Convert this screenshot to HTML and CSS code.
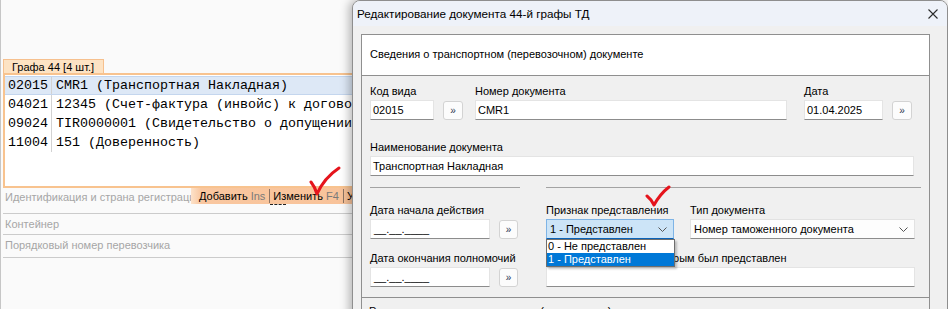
FILE: index.html
```html
<!DOCTYPE html>
<html lang="ru">
<head>
<meta charset="utf-8">
<title>Графа 44</title>
<link rel="stylesheet" href="styles.css">
</head>
<body>
<div class="app">
  <div class="tab">Графа 44 [4 шт.]</div>
  <div class="grid">
    <div class="grow selected"><span class="c1">02015</span><span class="c2">CMR1 (Транспортная Накладная)</span></div>
    <div class="grow"><span class="c1">04021</span><span class="c2">12345 (Счет-фактура (инвойс) к договору)</span></div>
    <div class="grow"><span class="c1">09024</span><span class="c2">TIR0000001 (Свидетельство о допущении)</span></div>
    <div class="grow"><span class="c1">11004</span><span class="c2">151 (Доверенность)</span></div>
  </div>
  <div class="field f1">
    <span class="flabel lab1">Идентификация и страна регистрации</span>
    <div class="toolbar">
      <span class="tb-item">Добавить <span class="key">Ins</span></span>
      <span class="tb-sep"></span>
      <span class="tb-item focus">Изменить <span class="key">F4</span></span>
      <span class="tb-sep"></span>
      <span class="tb-item">Удалить <span class="key">Del</span></span>
    </div>
  </div>
  <div class="field f2"><span class="flabel">Контейнер</span></div>
  <div class="field f3"><span class="flabel">Порядковый номер перевозчика</span></div>
</div>

<div class="dialog">
  <div class="titlebar">
    <span class="title">Редактирование документа 44-й графы ТД</span>
    <svg class="close" width="10" height="10" viewBox="0 0 10 10"><path d="M0.5 0.5 L9.5 9.5 M9.5 0.5 L0.5 9.5" stroke="#2b2b2b" stroke-width="1.1" fill="none"/></svg>
  </div>
  <div class="dbody">
    <div class="frame">
      <div class="fheader">Сведения о транспортном (перевозочном) документе</div>
      <div class="group">
        <div class="frow">
          <div class="fld w64"><div class="lbl">Код вида</div><div class="input">02015</div></div>
          <div class="pick pick-a">»</div>
          <div class="fld w312 ml12"><div class="lbl">Номер документа</div><div class="input">CMR1</div></div>
          <div class="fld w79 ml17"><div class="lbl">Дата</div><div class="input">01.04.2025</div></div>
          <div class="pick pick-a">»</div>
        </div>
        <div class="frow rb">
          <div class="fld w544"><div class="lbl">Наименование документа</div><div class="input">Транспортная Накладная</div></div>
        </div>
        <div class="seprow">
          <div class="sep w150"></div>
          <div class="sep w375 ml26"></div>
        </div>
        <div class="frow rc">
          <div class="fld w120"><div class="lbl">Дата начала действия</div><div class="input date">__.__.____</div></div>
          <div class="pick">»</div>
          <div class="fld w128 ml28 combo-wrap">
            <div class="lbl">Признак представления</div>
            <div class="select focused"><span>1 - Представлен</span><svg width="9" height="5" viewBox="0 0 9 5"><path d="M0.5 0.5 L4.5 4.5 L8.5 0.5" stroke="#555" fill="none"/></svg></div>
            <div class="dropdown">
              <div class="opt">0 - Не представлен</div>
              <div class="opt sel">1 - Представлен</div>
            </div>
          </div>
          <div class="fld w225 ml16">
            <div class="lbl">Тип документа</div>
            <div class="select"><span>Номер таможенного документа</span><svg width="9" height="5" viewBox="0 0 9 5"><path d="M0.5 0.5 L4.5 4.5 L8.5 0.5" stroke="#555" fill="none"/></svg></div>
          </div>
        </div>
        <div class="frow rd">
          <div class="fld w120"><div class="lbl">Дата окончания полномочий</div><div class="input date">__.__.____</div></div>
          <div class="pick">»</div>
          <div class="fld w369 ml28"><div class="lbl">Номер документа, с которым был представлен</div><div class="input"></div></div>
        </div>
      </div>
      <div class="group2"><div class="lbl">Реквизиты документа-основания (при наличии)</div></div>
    </div>
  </div>
</div>

<svg class="mark mark1" width="40" height="40" viewBox="0 0 40 40"><path d="M3 16 Q7 21 9 28 Q16 12 31 2" stroke="#e5141c" stroke-width="3" fill="none" stroke-linecap="round" stroke-linejoin="round"/></svg>
<svg class="mark mark2" width="40" height="40" viewBox="0 0 40 40"><path d="M3 11 Q7 14 10 20 Q16 9 25 2" stroke="#e5141c" stroke-width="3" fill="none" stroke-linecap="round" stroke-linejoin="round"/></svg>
</body>
</html>
```

FILE: styles.css
```css
* { box-sizing: border-box; }
html, body { margin: 0; padding: 0; }
body {
  width: 948px;
  height: 309px;
  overflow: hidden;
  position: relative;
  background: #fafafa;
  font-family: "Liberation Sans", Arial, sans-serif;
  font-size: 11px;
  color: #000;
}

/* background application */
.app {
  height: 309px;
  border-left: 1px solid #c6c6c6;
  padding-left: 2px;
  padding-top: 59px;
  overflow: hidden;
}
.tab {
  width: 101px;
  height: 14px;
  background: #fde3c4;
  border: 1px solid #f6c08e;
  border-bottom: none;
  line-height: 14px;
  padding-left: 8px;
  white-space: nowrap;
}
.grid {
  width: 430px;
  height: 115px;
  background: #fff;
  border: 2px solid #f8c38f;
  padding-top: 1px;
}
.grow {
  display: flex;
  height: 19px;
  line-height: 19px;
  font-family: "Liberation Mono", monospace;
  font-size: 13.33px;
  white-space: nowrap;
}
.grow.selected {
  background: #dde8f6;
  border-top: 1px solid #c4d6ee;
  border-bottom: 1px solid #c4d6ee;
  line-height: 17px;
}
.c1 {
  width: 47px;
  padding-left: 3px;
  border-right: 1px solid #d2d2d2;
  flex: none;
}
.c2 { padding-left: 4px; }

.field {
  display: flex;
  align-items: flex-start;
  width: 430px;
  border-bottom: 1px solid #cbcbcb;
  white-space: nowrap;
}
.f1 { height: 26px; }
.f2 { height: 21px; padding-top: 1px; }
.f3 { height: 23px; padding-top: 1px; }
.flabel {
  color: #a6a6a6;
  line-height: 18px;
  padding-left: 2px;
}
.lab1 {
  flex: 0 0 188px;
  overflow: hidden;
}
.toolbar {
  display: flex;
  align-items: center;
  height: 16px;
  padding-left: 8px;
  background: linear-gradient(to right, #fde2ca 0, #f9c7a0 10px, #f8c197 100%);
  flex: none;
}
.tb-item { line-height: 16px; }
.key { color: #7a7a7a; }
.tb-sep {
  width: 1px;
  height: 14px;
  background: #8c7464;
  margin: 0 3px 0 4px;
}
.tb-item.focus { position: relative; }
.tb-item.focus::after {
  content: "";
  position: absolute;
  left: -3px;
  top: 16px;
  width: 16px;
  border-top: 1px dashed #222;
}

/* dialog window */
.dialog {
  position: absolute;
  left: 352px;
  top: 0;
  width: 596px;
  height: 330px;
  background: #f0f0f0;
  border: 1px solid #8e8e8e;
  border-radius: 8px 8px 0 0;
  box-shadow: -3px 0 10px rgba(0, 0, 0, 0.28);
}
.titlebar {
  height: 25px;
  background: #eef2f9;
  border-radius: 7px 7px 0 0;
  display: flex;
  align-items: center;
  justify-content: space-between;
  padding: 0 9px 0 4px;
}
.title { white-space: nowrap; font-size: 11.7px; }
.dbody { padding: 8px 0 0 8px; }
.frame {
  width: 569px;
  border: 1px solid #8f8f8f;
  border-bottom: none;
}
.fheader {
  height: 41px;
  background: #fff;
  border-bottom: 1px solid #8f8f8f;
  padding-left: 8px;
  line-height: 38px;
  white-space: nowrap;
}
.group {
  padding: 7px 0 10px 8px;
  border-bottom: 1px solid #8f8f8f;
}
.group2 { padding: 5px 0 0 7px; height: 20px; overflow: hidden; }

.frow { display: flex; align-items: flex-end; }
.rb { margin-top: 19px; }
.rc { margin-top: 14px; }
.rd { margin-top: 11px; }
.fld { flex: none; }
.lbl {
  line-height: 16px;
  height: 16px;
  margin-bottom: 1px;
  white-space: nowrap;
}
.w64 { width: 64px; }
.w79 { width: 79px; }
.w120 { width: 120px; }
.w128 { width: 128px; }
.w150 { width: 150px; }
.w225 { width: 225px; }
.w312 { width: 312px; }
.w369 { width: 369px; }
.w375 { width: 375px; }
.w544 { width: 544px; }
.ml12 { margin-left: 12px; }
.ml16 { margin-left: 16px; }
.ml17 { margin-left: 17px; }
.ml26 { margin-left: 26px; }
.ml28 { margin-left: 28px; }

.input {
  height: 20px;
  background: #fff;
  border: 1px solid #e4e4e4;
  border-bottom-color: #8c8c8c;
  padding-left: 2px;
  line-height: 18px;
  white-space: nowrap;
  overflow: hidden;
}
.input.date { padding-left: 3px; }
.pick {
  flex: none;
  width: 19px;
  height: 19px;
  margin-left: 9px;
  border: 1px solid #d3d3d3;
  border-radius: 3px;
  background: #fcfcfc;
  font-size: 10px;
  line-height: 18px;
  text-align: center;
  color: #2a3550;
}
.pick-a { width: 20px; }
.seprow { display: flex; margin-top: 11px; }
.sep { height: 1px; background: #a3a3a3; }

.select {
  height: 20px;
  background: #fdfdfd;
  border: 1px solid #e2e2e2;
  border-bottom-color: #8c8c8c;
  display: flex;
  align-items: center;
  justify-content: space-between;
  padding: 0 6px 0 3px;
  white-space: nowrap;
}
.select.focused {
  background: #cce4f7;
  border-color: #7eb4e6;
  border-bottom-color: #0a63b8;
}
.combo-wrap { position: relative; }
.dropdown {
  position: absolute;
  left: 0;
  top: 37px;
  width: 129px;
  background: #fff;
  border: 1px solid #6e6e6e;
  box-shadow: 2px 2px 2px rgba(0, 0, 0, 0.22);
  z-index: 2;
}
.opt {
  height: 13px;
  line-height: 13px;
  padding-left: 1px;
  white-space: nowrap;
}
.opt.sel { background: #0078d7; color: #fff; }

.mark { position: absolute; }
.mark1 { left: 308px; top: 166px; }
.mark2 { left: 644px; top: 185px; }
```
